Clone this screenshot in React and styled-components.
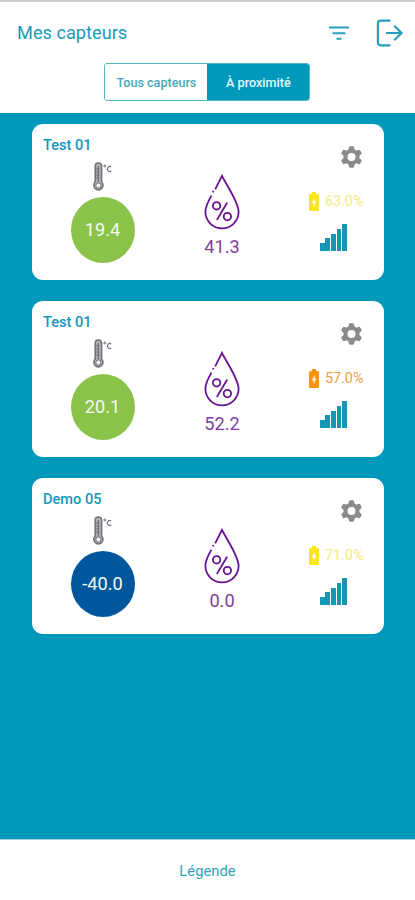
import React, { useState } from 'react'
import styled, { createGlobalStyle } from 'styled-components'

const GlobalStyle = createGlobalStyle`
  * {
    box-sizing: border-box;
  }
  body {
    margin: 0;
    background: #0099bc;
    font-family: Roboto, 'Liberation Sans', sans-serif;
  }
  button {
    font-family: inherit;
    padding: 0;
    border: 0;
    background: none;
  }
  svg {
    display: block;
  }
`

const Screen = styled.div`
  display: flex;
  flex-direction: column;
  height: 900px;
  background: #0099bc;
`

const Header = styled.header`
  height: 113px;
  flex: none;
  background: #fff;
  border-top: 2px solid #cbcbcb;
`

const TitleBar = styled.div`
  display: flex;
  align-items: center;
  height: 61px;
  padding: 0 11px 0 17px;
  color: #1c9ab8;
`

const Title = styled.h1`
  flex: 1;
  margin: 0;
  font-size: 18.2px;
  font-weight: 400;
`

const IconButton = styled.button`
  margin-left: ${({ $gap }) => $gap || 0}px;
  color: inherit;
`

const Tabs = styled.div`
  display: flex;
  width: 206px;
  height: 38px;
  margin: 0 0 0 104.4px;
  border: 1px solid #55b5c9;
  border-radius: 3px;
  overflow: hidden;
`

const Tab = styled.button`
  flex: 1;
  font-size: 12.6px;
  font-weight: 500;
  color: ${({ $active }) => $active ? '#e4f8fa' : '#45a9b9'};
  background: ${({ $active }) => $active ? '#0099bc' : '#fff'};
`

const List = styled.main`
  flex: 1;
  display: flex;
  flex-direction: column;
  gap: 21.5px;
  padding: 11px 31.5px 0 32px;
`

const Card = styled.section`
  display: grid;
  grid-template-columns: 141px 98px 1fr;
  height: 155.5px;
  background: #fff;
  border-radius: 11px;
`

const TemperatureColumn = styled.div`
  display: flex;
  flex-direction: column;
  align-items: center;
`

const Name = styled.h2`
  align-self: flex-start;
  height: 18px;
  margin: 12px 0 0 11px;
  font-size: 14.6px;
  line-height: 18px;
  font-weight: 500;
  color: #1498b8;
`

const Thermometer = styled.svg`
  width: 20px;
  height: 30px;
  margin: 8px 1px 5px 0;
`

const Reading = styled.div`
  width: 64px;
  height: 66px;
  border-radius: 50%;
  background: ${({ $color }) => $color};
  color: #f4faf4;
  font-size: 18.2px;
  line-height: 66px;
  text-align: center;
`

const HumidityColumn = styled.div`
  display: flex;
  flex-direction: column;
  align-items: center;
  padding-top: 49px;
`

const Humidity = styled.span`
  margin-top: 5.6px;
  font-size: 18.2px;
  line-height: 22px;
  color: #83409b;
`

const StatusColumn = styled.div`
  display: flex;
  flex-direction: column;
  align-items: flex-end;
  padding: 22px 21.5px 0 0;
`

const Battery = styled.div`
  display: flex;
  align-items: center;
  gap: 6px;
  height: 20px;
  margin-top: 23.5px;
  margin-right: -1.5px;
  font-size: 14.4px;
  color: ${({ $color }) => $color};
  svg {
    color: ${({ $icon }) => $icon};
  }
`

const Signal = styled.div`
  display: flex;
  align-items: flex-end;
  gap: 0.8px;
  height: 28px;
  margin: 11.5px 15px 0 0;
`

const Bar = styled.span`
  width: 4.8px;
  background: #1696b5;
  height: ${({ $level }) => 3 + $level * 4.8}px;
`

const Footer = styled.footer`
  display: flex;
  align-items: center;
  justify-content: center;
  flex: none;
  height: 61px;
  background: #fff;
  border-top: 1px solid #a9cbd2;
  color: #36a2b8;
  font-size: 14.8px;
  font-weight: 400;
  padding-top: 2px;
`

const FilterIcon = () => (
  <svg width="20" height="14" viewBox="0 0 20 14" fill="none" stroke="#299eba" strokeWidth="2">
    <path d="M0 1.5h20M3.5 7.2h13M7.6 12.8h4.8" />
  </svg>
)

const LogoutIcon = () => (
  <svg width="28" height="28" viewBox="0 0 28 28" fill="none" stroke="#299eba" strokeWidth="2.2">
    <path d="M14.5 1.7H4.6Q1.9 1.7 1.9 4.4v19.2q0 2.7 2.7 2.7h9.9" />
    <path d="M10 14h16M18.2 6.7l7.3 7.3-7.3 7.3" />
  </svg>
)

const GearIcon = () => (
  <svg width="21" height="22" viewBox="-10.5 -11 21 22" fill="#8b8b8b">
    <circle r="6" fill="none" stroke="#8b8b8b" strokeWidth="4" />
    {[0, 60, 120, 180, 240, 300].map((angle) => (
      <path key={angle} d="M-3.3-6.5L-2.4-10.1Q-2.2-10.8-1.5-10.8h3q.7 0 .9.7l.9 3.6z" transform={`rotate(${angle})`} />
    ))}
  </svg>
)

const ThermometerIcon = () => (
  <Thermometer viewBox="0 0 20 30" fill="none">
    <path d="M3.2 20V4.2a3.2 3.2 0 0 1 6.4 0V20a4.6 4.6 0 1 1-6.4 0z" fill="#b4b1b5" stroke="#716e74" strokeWidth="1.5" />
    <path d="M6.3 4v16M3.5 7h4M3.5 10h4M3.5 13h4M3.5 16h4" stroke="#716e74" strokeWidth="1.2" />
    <circle cx="6.4" cy="23.5" r="2.6" fill="#f4f3f4" stroke="#716e74" />
    <circle cx="12.8" cy="4" r="1" stroke="#716e74" strokeWidth="1" />
    <path d="M19.2 5.1a2.4 2.4 0 1 0 0 3.8" stroke="#716e74" strokeWidth="1.2" />
  </Thermometer>
)

const DropIcon = () => (
  <svg width="36" height="57" viewBox="0 0 36 57" fill="none" stroke="#68128f" strokeWidth="1.8">
    <path d="M11.2 16.3L18 2.8C21.6 10.6 34.6 29 34.6 38.8a16.6 16.6 0 0 1-33.2 0c0-5.2 2.8-10.6 6-16.2" />
    <path d="M8.8 19.4l.8-1.4" />
    <circle cx="12.6" cy="32.8" r="3.7" />
    <circle cx="23.4" cy="43.6" r="3.7" />
    <path d="M22.8 30.2L13.2 46.4" strokeLinecap="round" />
  </svg>
)

const BatteryIcon = () => (
  <svg width="10" height="19" viewBox="0 0 10 19">
    <path d="M3 0h4v2h1.5Q10 2 10 3.5v14q0 1.5-1.5 1.5h-7Q0 19 0 17.5v-14Q0 2 1.5 2H3z" fill="currentColor" />
    <path d="M5.5 6L2.8 11.3h1.7V15l2.8-5.4H5.5z" fill="#fff" />
  </svg>
)

const levels = [1, 2, 3, 4, 5]

const yellow = { text: '#f5ec7c', icon: '#fbe51c' }
const orange = { text: '#efa13e', icon: '#fd930b' }

const sensors = [
  { id: 1, name: 'Test 01', temperature: '19.4', color: '#8bc34a', humidity: '41.3', battery: '63.0%', charge: yellow },
  { id: 2, name: 'Test 01', temperature: '20.1', color: '#8bc34a', humidity: '52.2', battery: '57.0%', charge: orange },
  { id: 3, name: 'Demo 05', temperature: '-40.0', color: '#01579b', humidity: '0.0', battery: '71.0%', charge: yellow },
]

const SensorCard = ({ sensor }) => (
  <Card>
    <TemperatureColumn>
      <Name>{sensor.name}</Name>
      <ThermometerIcon />
      <Reading $color={sensor.color}>{sensor.temperature}</Reading>
    </TemperatureColumn>
    <HumidityColumn>
      <DropIcon />
      <Humidity>{sensor.humidity}</Humidity>
    </HumidityColumn>
    <StatusColumn>
      <IconButton aria-label="Paramètres">
        <GearIcon />
      </IconButton>
      <Battery $color={sensor.charge.text} $icon={sensor.charge.icon}>
        <BatteryIcon />
        {sensor.battery}
      </Battery>
      <Signal>
        {levels.map((level) => <Bar key={level} $level={level} />)}
      </Signal>
    </StatusColumn>
  </Card>
)

const App = () => {
  const [tab, setTab] = useState('near')

  return (
    <>
      <GlobalStyle />
      <Screen>
        <Header>
          <TitleBar>
            <Title>Mes capteurs</Title>
            <IconButton aria-label="Filtrer"><FilterIcon /></IconButton>
            <IconButton aria-label="Déconnexion" $gap={27}><LogoutIcon /></IconButton>
          </TitleBar>
          <Tabs>
            <Tab $active={tab === 'all'} onClick={() => setTab('all')}>Tous capteurs</Tab>
            <Tab $active={tab === 'near'} onClick={() => setTab('near')}>À proximité</Tab>
          </Tabs>
        </Header>
        <List>
          {sensors.map((sensor) => <SensorCard key={sensor.id} sensor={sensor} />)}
        </List>
        <Footer>Légende</Footer>
      </Screen>
    </>
  )
}

export default App
